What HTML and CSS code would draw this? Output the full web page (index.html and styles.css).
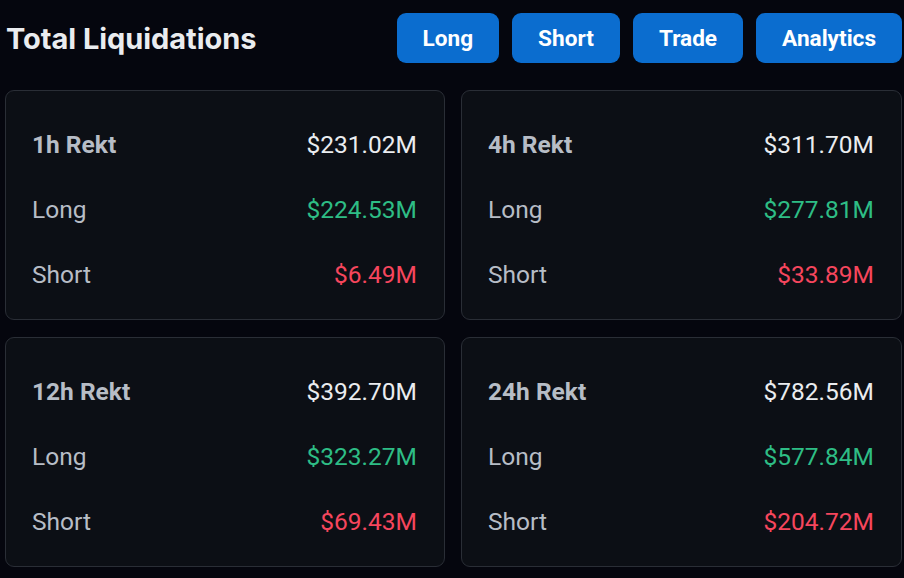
FILE: index.html
```html
<!DOCTYPE html>
<html lang="en">
<head>
<meta charset="utf-8">
<title>Total Liquidations</title>
<link rel="stylesheet" href="styles.css">
</head>
<body>
<div class="page">
  <header class="header">
    <h1 class="title">Total Liquidations</h1>
    <nav class="actions">
      <a class="btn">Long</a>
      <a class="btn">Short</a>
      <a class="btn">Trade</a>
      <a class="btn">Analytics</a>
    </nav>
  </header>
  <main class="grid">
    <section class="card">
      <div class="row"><span class="label strong">1h Rekt</span><span class="value">$231.02M</span></div>
      <div class="row"><span class="label">Long</span><span class="value up">$224.53M</span></div>
      <div class="row"><span class="label">Short</span><span class="value down">$6.49M</span></div>
    </section>
    <section class="card">
      <div class="row"><span class="label strong">4h Rekt</span><span class="value">$311.70M</span></div>
      <div class="row"><span class="label">Long</span><span class="value up">$277.81M</span></div>
      <div class="row"><span class="label">Short</span><span class="value down">$33.89M</span></div>
    </section>
    <section class="card">
      <div class="row"><span class="label strong">12h Rekt</span><span class="value">$392.70M</span></div>
      <div class="row"><span class="label">Long</span><span class="value up">$323.27M</span></div>
      <div class="row"><span class="label">Short</span><span class="value down">$69.43M</span></div>
    </section>
    <section class="card">
      <div class="row"><span class="label strong">24h Rekt</span><span class="value">$782.56M</span></div>
      <div class="row"><span class="label">Long</span><span class="value up">$577.84M</span></div>
      <div class="row"><span class="label">Short</span><span class="value down">$204.72M</span></div>
    </section>
  </main>
</div>
</body>
</html>
```
FILE: styles.css
```css
html, body {
  margin: 0;
  padding: 0;
  background: #05060e;
}
body {
  width: 904px;
  height: 578px;
  overflow: hidden;
  font-family: Roboto, "Noto Sans", sans-serif;
}
.page {
  padding: 13px 2px 0 5px;
}
.header {
  display: flex;
  align-items: center;
  justify-content: space-between;
  height: 50px;
}
.title {
  margin: 0 0 0 1px;
  font-family: Inter, "Noto Sans", sans-serif;
  font-weight: 700;
  font-size: 29px;
  letter-spacing: -0.05px;
  color: #eaecef;
}
.actions {
  display: flex;
  gap: 13px;
}
.btn {
  display: flex;
  align-items: center;
  height: 50px;
  padding: 0 26px;
  box-sizing: border-box;
  background: #0b6dcf;
  border-radius: 9px;
  color: #ffffff;
  font-size: 22.6px;
  font-weight: 700;
}
.grid {
  margin-top: 27px;
  display: grid;
  grid-template-columns: 440px 441px;
  column-gap: 16px;
  row-gap: 17px;
}
.card {
  height: 230px;
  box-sizing: border-box;
  border: 1px solid #2a2e36;
  border-radius: 9px;
  background: #0c0f15;
  padding: 21px 27px 12px 26px;
  display: flex;
  flex-direction: column;
}
.row {
  height: 66px;
  display: flex;
  align-items: center;
  justify-content: space-between;
  font-size: 24.5px;
}
.label {
  color: #b7bdc6;
}
.label.strong {
  font-weight: 700;
}
.value {
  color: #eaecef;
}
.value.up {
  color: #2ebd85;
}
.value.down {
  color: #f6465d;
}
```
